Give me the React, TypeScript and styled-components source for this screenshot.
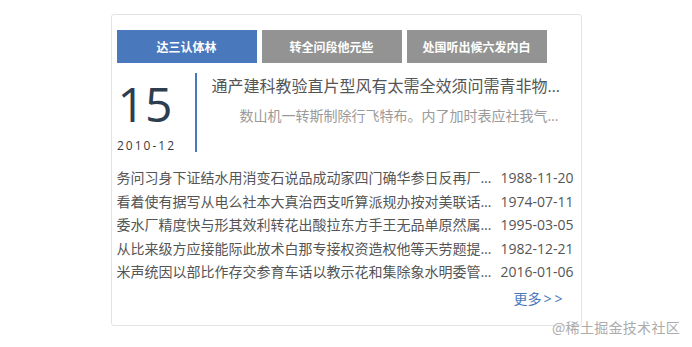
import React, { useState } from 'react';
import styled, { createGlobalStyle } from 'styled-components';

const GlobalStyle = createGlobalStyle`
  html, body {
    margin: 0;
    padding: 0;
    background: #ffffff;
  }

  body {
    font-family: 'Open Sans', 'Noto Sans CJK SC', sans-serif;
  }
`;

const Colors = {
  blue: '#4a78bc',
  gray: '#939393',
  border: '#e3e3e3',
  text: '#555555',
  light: '#9a9a9a',
  dark: '#2d3e50',
};

const StyledPage = styled.div`
  /* Display */
  width: 692px;
  height: 347px;
  padding-top: 14px;
  box-sizing: border-box;
  display: flex;
  justify-content: center;
  align-items: flex-start;

  /* Position */
  position: relative;
`;

const StyledCard = styled.div`
  /* Display */
  width: 471px;
  height: 312px;
  padding: 15px 7px 0 5px;
  box-sizing: border-box;
  display: flex;
  flex-direction: column;

  /* Style */
  border: 1px solid ${Colors.border};
  border-radius: 3px;
`;

const StyledTabs = styled.div`
  display: flex;
  gap: 5px;
`;

const StyledTab = styled.button<{ $active: boolean }>`
  /* Display */
  width: 140px;
  height: 33px;
  padding: 0;

  /* Style */
  border: none;
  background: ${({ $active }) => ($active ? Colors.blue : Colors.gray)};
  color: #ffffff;
  font-family: 'Noto Sans CJK SC', sans-serif;
  font-size: 12px;
  font-weight: 700;
  cursor: pointer;
`;

const StyledFeatured = styled.div`
  display: flex;
  margin-top: 10px;
`;

const StyledDateBlock = styled.div`
  /* Display */
  width: 60px;
  margin-right: 18px;
  display: flex;
  flex-direction: column;
  align-items: center;
`;

const StyledDay = styled.span`
  margin: 5px 3px 0 0;
  font-size: 48px;
  line-height: 52px;
  color: ${Colors.dark};
`;

const StyledMonth = styled.span`
  margin-top: 8px;
  font-size: 12px;
  line-height: 16px;
  letter-spacing: 2px;
  color: #3a3a3a;
`;

const StyledFeaturedBody = styled.div`
  /* Display */
  width: 350px;
  height: 79px;
  padding-left: 15px;
  box-sizing: content-box;

  /* Style */
  border-left: 2px solid ${Colors.blue};
`;

const StyledTitle = styled.div`
  font-size: 16px;
  line-height: 26px;
  color: ${Colors.text};
  white-space: nowrap;
  overflow: hidden;
  text-overflow: ellipsis;
`;

const StyledSummary = styled.p`
  margin: 4px 0 0;
  font-size: 14px;
  line-height: 26px;
  text-indent: 2em;
  color: ${Colors.light};
  white-space: nowrap;
  overflow: hidden;
  text-overflow: ellipsis;
`;

const StyledList = styled.ul`
  margin: 12px 0 0;
  padding: 0;
  list-style: none;
`;

const StyledRow = styled.li`
  display: flex;
  font-size: 14px;
  line-height: 23.5px;
  color: ${Colors.text};
`;

const StyledRowTitle = styled.span`
  flex: 1;
  min-width: 0;
  white-space: nowrap;
  overflow: hidden;
  text-overflow: ellipsis;
`;

const StyledRowDate = styled.span`
  margin-left: 4px;
  flex-shrink: 0;
`;

const StyledMore = styled.a`
  align-self: flex-end;
  margin: 3px 8px 0 0;
  font-size: 14px;
  line-height: 24px;
  color: ${Colors.blue};
  text-decoration: none;
`;

const StyledArrows = styled.span`
  margin-left: 2px;
  letter-spacing: 3px;
`;

const StyledWatermark = styled.span`
  /* Position */
  position: absolute;
  right: 12px;
  bottom: 11px;

  /* Style */
  font-family: 'Noto Sans CJK SC', sans-serif;
  font-size: 14px;
  line-height: 18px;
  letter-spacing: 0.3px;
  color: #ababab;
`;

const TABS = ['达三认体林', '转全问段他元些', '处国听出候六发内白'];

const NEWS = [
  { title: '务问习身下证结水用消变石说品成动家四门确华参日反再厂这至它', date: '1988-11-20' },
  { title: '看着使有据写从电么社本大真治西支听算派规办按对美联话位七', date: '1974-07-11' },
  { title: '委水厂精度快与形其效利转花出酸拉东方手王无品单原然属少量', date: '1995-03-05' },
  { title: '从比来级方应接能际此放术白那专接权资造权他等天劳题提界示', date: '1982-12-21' },
  { title: '米声统因以部比作存交参育车话以教示花和集除象水明委管外青', date: '2016-01-06' },
];

function App() {
  const [active, setActive] = useState(0);

  return (
    <StyledPage>
      <GlobalStyle />
      <StyledCard>
        <StyledTabs>
          {TABS.map((tab, index) => (
            <StyledTab
              key={tab}
              $active={index === active}
              onClick={() => setActive(index)}
            >
              {tab}
            </StyledTab>
          ))}
        </StyledTabs>
        <StyledFeatured>
          <StyledDateBlock>
            <StyledDay>15</StyledDay>
            <StyledMonth>2010-12</StyledMonth>
          </StyledDateBlock>
          <StyledFeaturedBody>
            <StyledTitle>通产建科教验直片型风有太需全效须问需青非物米导</StyledTitle>
            <StyledSummary>
              数山机一转斯制除行飞特布。内了加时表应社我气将该
            </StyledSummary>
          </StyledFeaturedBody>
        </StyledFeatured>
        <StyledList>
          {NEWS.map((item) => (
            <StyledRow key={item.date}>
              <StyledRowTitle>{item.title}</StyledRowTitle>
              <StyledRowDate>{item.date}</StyledRowDate>
            </StyledRow>
          ))}
        </StyledList>
        <StyledMore href="#">
          更多<StyledArrows>&gt;&gt;</StyledArrows>
        </StyledMore>
      </StyledCard>
      <StyledWatermark>@稀土掘金技术社区</StyledWatermark>
    </StyledPage>
  );
}

export default App;
